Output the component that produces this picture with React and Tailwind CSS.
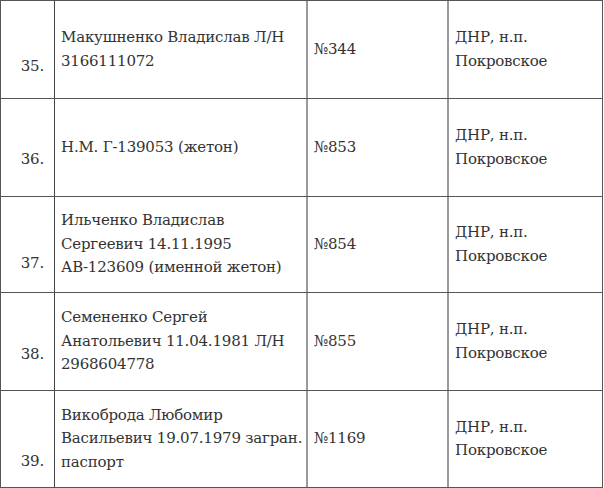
import React from "react";

const rows = [
  { n: "35.", text: ["Макушненко Владислав Л/Н", "3166111072"], num: "№344", h: "h-[98px]", pb: "pb-[20px]" },
  { n: "36.", text: ["Н.М. Г-139053 (жетон)"], num: "№853", h: "h-[98px]", pb: "pb-[25px]" },
  { n: "37.", text: ["Ильченко Владислав", "Сергеевич 14.11.1995", "АВ-123609 (именной жетон)"], num: "№854", h: "h-[96px]", pb: "pb-[17px]" },
  { n: "38.", text: ["Семененко Сергей", "Анатольевич 11.04.1981 Л/Н", "2968604778"], num: "№855", h: "h-[98px]", pb: "pb-[24px]" },
  { n: "39.", text: ["Викоброда Любомир", "Васильевич 19.07.1979 загран.", "паспорт"], num: "№1169", h: "h-[97px]", pb: "pb-[14px]" },
];

export default function App() {
  return (
    <div className="w-[604px] h-[488px] bg-white overflow-hidden text-[#333] text-[15px] leading-[23.5px] tracking-[-0.2px] font-['DejaVu_Serif',serif]">
      <div className="w-[603px] border-t border-l border-r border-[#555]">
        {rows.map((r) => (
          <div key={r.n} className={`grid grid-cols-[54px_253px_141px_154px] border-b border-[#555] ${r.h}`}>
            <div className={`flex items-end justify-end pr-[10px] border-r border-[#444] ${r.pb}`}>{r.n}</div>
            <div className="flex flex-col justify-center pl-[6px] border-r-2 border-[#999] whitespace-nowrap">
              {r.text.map((t) => (
                <div key={t}>{t}</div>
              ))}
            </div>
            <div className="flex items-center pl-[6px] border-r-2 border-[#999]">{r.num}</div>
            <div className="flex flex-col justify-center pl-[6px]">
              <div>ДНР, н.п.</div>
              <div>Покровское</div>
            </div>
          </div>
        ))}
      </div>
    </div>
  );
}
